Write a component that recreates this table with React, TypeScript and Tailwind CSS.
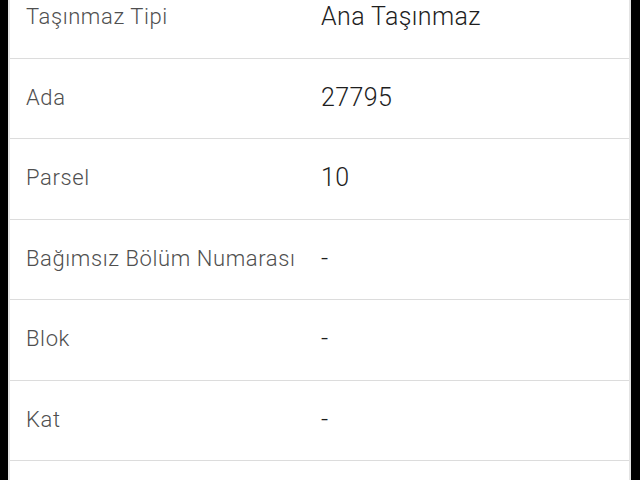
import React from "react";

const rows: [string, string][] = [
  ["Taşınmaz Tipi", "Ana Taşınmaz"],
  ["Ada", "27795"],
  ["Parsel", "10"],
  ["Bağımsız Bölüm Numarası", "-"],
  ["Blok", "-"],
  ["Kat", "-"],
  ["", ""],
];

export default function App() {
  return (
    <div
      className="w-[640px] h-[480px] overflow-hidden bg-black pl-[8px] pr-[9px]"
      style={{ fontFamily: "Roboto, 'Noto Sans', sans-serif" }}
    >
      <div className="h-full bg-white border-l-2 border-r-2 border-[#e4e4e4] overflow-hidden">
        <div className="-mt-[22px]">
          {rows.map(([label, value], i) => (
            <div
              key={i}
              className="flex items-center h-[80.5px] border-b border-[#dcdcdc] pl-[16px]"
            >
              <div className="w-[295px] shrink-0 text-[22px] font-light text-[#4f4f4f] tracking-[0.6px] pb-[2px]">
                {label}
              </div>
              <div className="text-[25px] font-light text-[#1e1e1e] tracking-[0.4px] pb-[2px]">{value}</div>
            </div>
          ))}
        </div>
      </div>
    </div>
  );
}
